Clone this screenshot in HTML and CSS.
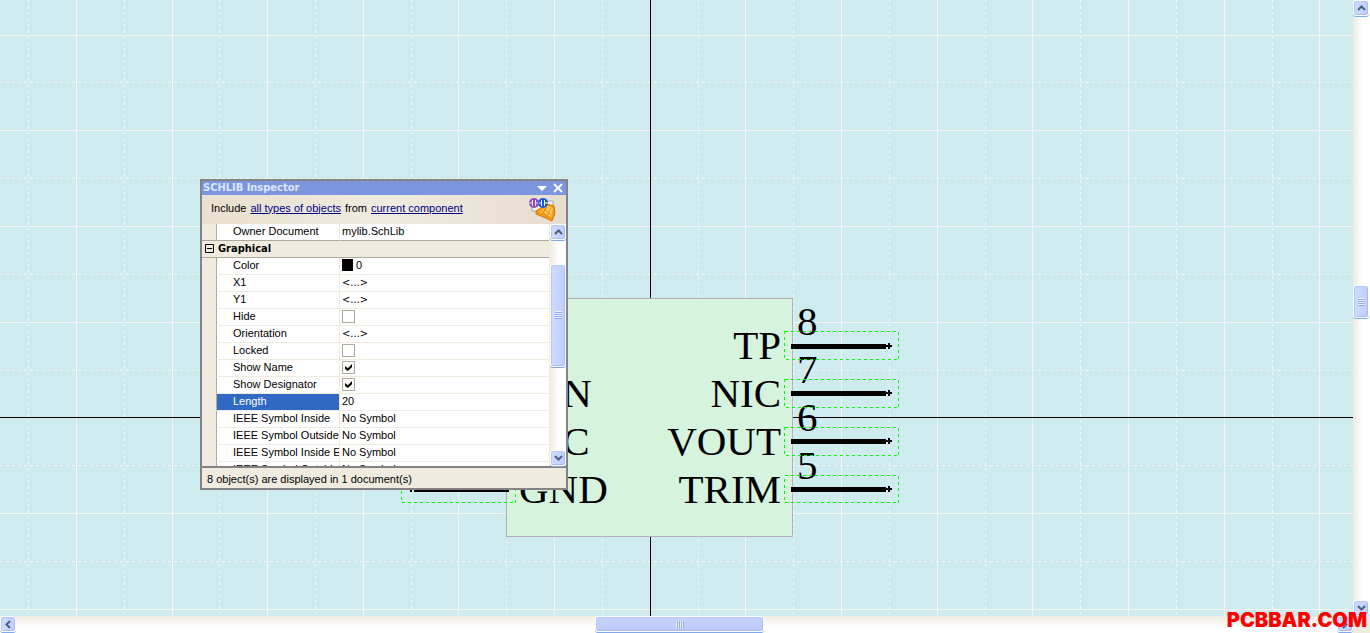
FILE: index.html
```html
<!DOCTYPE html>
<html lang="en">
<head>
<meta charset="utf-8">
<title>mylib.SchLib</title>
<link rel="stylesheet" href="styles.css">
</head>
<body>
<main class="editor">
  <section class="canvas" aria-label="Schematic canvas">
    <svg class="sheet" shape-rendering="crispEdges">
      <g id="grid"></g>
      <path class="axis" d="M650.5 0V2000M0 417.5H4000"/>
      <rect class="body" x="506.5" y="298.5" width="286" height="238"/>
      <g class="names">
        <text x="519" y="407">VIN</text>
        <text x="519" y="455">NIC</text>
        <text x="519" y="503">GND</text>
        <g text-anchor="end">
          <text x="781" y="359">TP</text>
          <text x="781" y="407">NIC</text>
          <text x="781" y="455">VOUT</text>
          <text x="781" y="503">TRIM</text>
        </g>
        <text x="797" y="335">8</text>
        <text x="797" y="383">7</text>
        <text x="797" y="431">6</text>
        <text x="797" y="479">5</text>
      </g>
      <path class="pin" d="M791 346.5H886M791 393.5H886M791 441.5H886M791 489.5H886M414 489.5H509"/>
      <path class="tip" d="M886 346H892M886 393H892M886 441H892M886 489H892M889 343V349M889 390V396M889 438V444M889 486V492M408 489H414M411 486V492"/>
      <path class="select" d="M784.5 331.5H898.5V359.5H784.5ZM784.5 379.5H898.5V407.5H784.5ZM784.5 427.5H898.5V455.5H784.5ZM784.5 475.5H898.5V502.5H784.5ZM401.5 475.5H515.5V502.5H401.5Z"/>
    </svg>

    <section class="inspector" aria-label="SCHLIB Inspector">
      <header class="title">
        <h1>SCHLIB Inspector</h1>
        <button aria-label="Menu"><svg width="10" height="8"><path d="M0 2H10L5 7Z" fill="#fff"/></svg></button>
        <button aria-label="Close"><svg width="10" height="10"><path d="M1 1L9 9M9 1L1 9" stroke="#fff" stroke-width="2"/></svg></button>
      </header>
      <div class="filter">
        <span>Include</span><a href="#">all types of objects</a><span>from</span><a href="#">current component</a>
        <svg class="logo" width="28" height="26">
          <path d="M3 4H24V14H3Z" fill="#f4f3f4" stroke="#a5a3aa"/>
          <path d="M7 14L18 7L25 9L26 16L23 24L17 21L7 17Z" fill="#f49b16" stroke="#d47505"/>
          <path d="M10 15L19 9L24 11L22 20Z" fill="#ffc94f"/>
          <path d="M12 14L20 20M15 12L22 18M18 10L13 17M22 11L17 21" stroke="#dd8820"/>
          <circle cx="5" cy="6" r="5" fill="#8b4bbb"/>
          <path d="M3.500 3V9M6.500 3V9M0 6H3M7 6H10" stroke="#eee2fa"/>
          <circle cx="14" cy="6" r="5" fill="#1756dc"/>
          <path d="M10 6H13M15 6H19M12.500 3V9M15.500 3V9" stroke="#fff"/>
        </svg>
      </div>
      <div class="list">
        <div class="rows">
          <table>
            <colgroup><col class="c-gutter"><col class="c-name"><col></colgroup>
            <tbody>
              <tr class="last"><td></td><th>Owner Document</th><td>mylib.SchLib</td></tr>
              <tr class="group"><td colspan="3"><button class="fold" aria-label="Collapse Graphical"><svg width="9" height="9"><path d="M.5 .5H8.5V8.5H.5ZM2 4.5H7" fill="none" stroke="#000"/></svg></button>Graphical</td></tr>
              <tr><td></td><th>Color</th><td><i class="swatch"></i>0</td></tr>
              <tr><td></td><th>X1</th><td class="mixed">&lt;...&gt;</td></tr>
              <tr><td></td><th>Y1</th><td class="mixed">&lt;...&gt;</td></tr>
              <tr><td></td><th><label for="hide">Hide</label></th><td><input type="checkbox" id="hide"></td></tr>
              <tr><td></td><th>Orientation</th><td class="mixed">&lt;...&gt;</td></tr>
              <tr><td></td><th><label for="locked">Locked</label></th><td><input type="checkbox" id="locked"></td></tr>
              <tr><td></td><th><label for="name">Show Name</label></th><td><input type="checkbox" id="name" checked></td></tr>
              <tr><td></td><th><label for="desig">Show Designator</label></th><td><input type="checkbox" id="desig" checked></td></tr>
              <tr class="current"><td></td><th>Length</th><td>20</td></tr>
              <tr><td></td><th>IEEE Symbol Inside</th><td>No Symbol</td></tr>
              <tr><td></td><th>IEEE Symbol Outside</th><td>No Symbol</td></tr>
              <tr><td></td><th>IEEE Symbol Inside Edge</th><td>No Symbol</td></tr>
              <tr><td></td><th>IEEE Symbol Outside Edge</th><td>No Symbol</td></tr>
            </tbody>
          </table>
        </div>
        <div class="bar vertical">
          <button class="arrow" aria-label="Scroll up"><svg width="9" height="6"><path d="M1 5L4.5 1.5L8 5"/></svg></button>
          <span class="gap list-before"></span>
          <span class="thumb list-thumb"><i class="grip"></i></span>
          <span class="gap list-after"></span>
          <button class="arrow" aria-label="Scroll down"><svg width="9" height="6"><path d="M1 1L4.5 4.5L8 1"/></svg></button>
        </div>
      </div>
      <footer class="status">8 object(s) are displayed in 1 document(s)</footer>
    </section>
  </section>

  <div class="bar vertical page-v">
    <button class="arrow" aria-label="Scroll up"><svg width="9" height="6"><path d="M1 5L4.5 1.5L8 5"/></svg></button>
    <span class="gap v-before"></span>
    <span class="thumb v-thumb"><i class="grip"></i></span>
    <span class="gap v-after"></span>
    <button class="arrow" aria-label="Scroll down"><svg width="9" height="6"><path d="M1 1L4.5 4.5L8 1"/></svg></button>
  </div>
  <div class="bar horizontal">
    <button class="arrow" aria-label="Scroll left"><svg width="6" height="9"><path d="M5 1L1.5 4.5L5 8"/></svg></button>
    <span class="gap h-before"></span>
    <span class="thumb h-thumb"><i class="grip"></i></span>
    <span class="gap h-after"></span>
    <button class="arrow" aria-label="Scroll right"><svg width="6" height="9"><path d="M1 1L4.5 4.5L1 8"/></svg></button>
  </div>
  <div class="corner"></div>
  <div class="watermark">PCBBAR.COM</div>
</main>
<script src="grid.js"></script>
</body>
</html>
```
FILE: grid.js
```
// Grid lines run outwards from the sheet origin; every second one is solid.
const origin = { x: 650.3, y: 417.9 };
const step = { x: 47.83, y: 47.86 };
let solid = "";
let dashed = "";
for (let i = -14; i <= 60; i++) {
  const x = Math.floor(origin.x + i * step.x) + 0.5;
  const y = Math.floor(origin.y + i * step.y) + 0.5;
  const line = `M${x} 0V2000M0 ${y}H4000`;
  if (i % 2 === 0) solid += line;
  else dashed += line;
}
document.getElementById("grid").innerHTML =
  `<path class="solid" d="${solid}"/><path class="dashed" d="${dashed}"/>`;
```
FILE: styles.css
```css
* { box-sizing: border-box; }

body {
  margin: 0;
  font: 11px/16px "Liberation Sans", Arial, sans-serif;
  color: #000;
}

button {
  border: 0;
  padding: 0;
  background: none;
  display: flex;
  align-items: center;
  justify-content: center;
}

.editor {
  position: relative;
  display: grid;
  grid-template-columns: 1fr 17px;
  grid-template-rows: 1fr 17px;
  height: 100vh;
  overflow: hidden;
}

.canvas {
  position: relative;
  overflow: hidden;
  background: #ceebef;
}

.sheet { display: block; width: 100%; height: 100%; }
.solid, .dashed { stroke: #f7f3ef; fill: none; }
.dashed { stroke-dasharray: 3 3; }
.axis { stroke: #000; fill: none; }
.body { fill: #d6f3de; stroke: #b5aeb5; }
.names { font: 41px "Liberation Serif", "Times New Roman", serif; }
.pin { stroke: #000; stroke-width: 5; }
.tip { stroke: #000; stroke-width: 2; }
.select { fill: none; stroke: #00ff00; stroke-dasharray: 3 3; }

/* Inspector window */
.inspector {
  position: absolute;
  left: 200px;
  top: 179px;
  width: 368px;
  border: 2px solid #848284;
  background: #efebde;
}

.title {
  display: flex;
  align-items: center;
  gap: 6px;
  height: 14px;
  padding: 0 3px 0 1px;
  background: #7b96de;
}
.title h1 {
  flex: 1;
  margin: 0;
  font: bold 11px/16px "DejaVu Sans Condensed", "DejaVu Sans", sans-serif;
  color: #dee7ff;
}

.filter {
  display: flex;
  align-items: center;
  gap: 4px;
  height: 29px;
  padding: 0 9px;
  background: linear-gradient(90deg, #e8e0d0, #efebde 50%, #e6ddcf);
}
.filter span, .filter a { padding-bottom: 4px; }
.filter a { color: #000084; }
.logo { margin-left: auto; }

.list { display: flex; height: 242px; }
.rows { flex: 1; overflow: hidden; background: #fff; }

table {
  width: 100%;
  table-layout: fixed;
  border-collapse: separate;
  border-spacing: 0;
}
.c-gutter { width: 15px; }
.c-name { width: 123px; }

td, th {
  height: 17px;
  padding: 0 0 0 2px;
  border-bottom: 1px solid #efebde;
  font-weight: normal;
  text-align: left;
  vertical-align: top;
  white-space: nowrap;
  overflow: hidden;
  line-height: 15px;
}
td:first-child { background: #efebde; border-right: 1px solid #adaa9c; }
th { padding-left: 16px; border-right: 1px solid #efebde; }
.last td, .last th { border-bottom-color: #adaa9c; }
.group td:first-child {
  padding-left: 3px;
  border-right: 0;
  border-bottom-color: #adaa9c;
  font: bold 11px/16px "DejaVu Sans Condensed", "DejaVu Sans", sans-serif;
}
.current th { background: #316ac5; color: #fff; }
.mixed { font-family: "DejaVu Sans Condensed", "DejaVu Sans", sans-serif; }

.fold {
  display: inline-flex;
  margin-right: 4px;
  vertical-align: -1px;
}
.swatch {
  display: inline-block;
  width: 11px;
  height: 12px;
  margin-right: 3px;
  background: #000;
  vertical-align: -2px;
}

input[type="checkbox"] {
  appearance: none;
  display: block;
  width: 13px;
  height: 13px;
  margin: 1px 0;
  border: 1px solid #adaa9c;
  background: #fff;
}
input:checked::before {
  content: "";
  display: block;
  width: 7px;
  height: 7px;
  margin: 2px;
  background: #000;
  clip-path: polygon(0 28%, 40% 60%, 100% 0, 100% 45%, 40% 100%, 0 70%);
}

.status {
  height: 22px;
  padding-left: 5px;
  border-top: 2px solid #848284;
  line-height: 22px;
}

/* Scroll bars */
.bar { display: flex; }
.vertical {
  flex-direction: column;
  width: 17px;
  background: linear-gradient(90deg, #efebe0, #f7f4ef 30%, #fff 50%);
}
.list .bar { border-left: 1px solid #efebde; }
.horizontal { background: linear-gradient(#efebe0, #f7f4ef 30%, #fff 60%); }
.corner { background: #efebde; }

.arrow, .thumb {
  flex: none;
  border: 1px solid #fff;
  border-radius: 3px;
  background: linear-gradient(90deg, #d0dcff, #bdcfff);
  box-shadow: inset -1px -1px #a5baf7, inset 1px 1px #b5c7f7, 0 1px #84a6e7;
}
.arrow { width: 16px; height: 16px; }
.arrow path { fill: none; stroke: #4a6184; stroke-width: 2; }
.thumb { display: flex; align-items: center; justify-content: center; }
.vertical .thumb { width: 16px; }
.horizontal .thumb {
  height: 16px;
  background: linear-gradient(#c6d3ff, #bdcbff);
}
.grip {
  width: 7px;
  height: 8px;
  background: repeating-linear-gradient(#eff3ff 0 1px, #8ca6ef 1px 2px);
}
.horizontal .grip {
  width: 8px;
  height: 7px;
  background: repeating-linear-gradient(90deg, #eff3ff 0 1px, #8ca6ef 1px 2px);
}

.list-before { flex: 23; }
.list-thumb { height: 103px; }
.list-after { flex: 81; }
.v-before { flex: 269; }
.v-thumb { height: 33px; }
.v-after { flex: 282; }
.h-before { flex: 579; }
.h-thumb { width: 169px; }
.h-after { flex: 573; }

.watermark {
  position: absolute;
  right: 3px;
  bottom: 2px;
  font: 900 20px/22px Inter, "Liberation Sans", sans-serif;
  color: #ff0000;
}
```
